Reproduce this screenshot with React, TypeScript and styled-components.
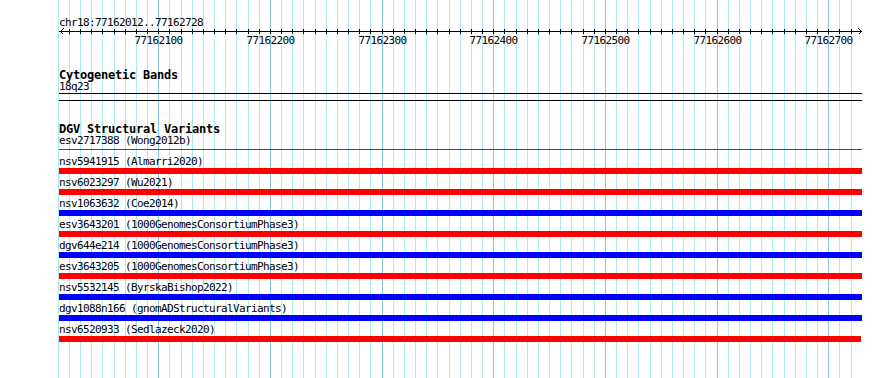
import React from 'react'
import styled, { createGlobalStyle, css } from 'styled-components'

// view: chr18:77162012..77162728, one grid line every 10 bp
const GRID_X0 = 57.8
const GRID_STEP = 11.167
const GRID_COUNT = 72
const TRACK_LEFT = 59
const gx = (k: number) => Math.round(GRID_X0 + k * GRID_STEP)
const isMajor = (k: number) => k % 10 === 9

const GlobalStyle = createGlobalStyle`
  html, body {
    margin: 0;
    padding: 0;
    background: #fff;
  }
  body {
    font-family: "DejaVu Sans Mono", "Liberation Mono", monospace;
    color: #000;
  }
`

const Panel = styled.div`
  position: relative;
  width: 890px;
  height: 378px;
  overflow: hidden;
  background: #fff;
`

const GridLayer = styled.svg`
  position: absolute;
  left: 0;
  top: 0;
  shape-rendering: crispEdges;
`

const Tracks = styled.div`
  position: relative;
  display: flex;
  flex-direction: column;
  width: 803px;
  margin-left: ${TRACK_LEFT}px;
  padding-top: 17px;
`

// regular 6px-wide label text, baseline 9px below the top of its box
const Label = styled.div<{ $h?: number }>`
  height: ${(p) => p.$h ?? 12}px;
  line-height: 11px;
  font-size: 11px;
  letter-spacing: -0.62px;
  white-space: nowrap;
`

// bold 7px-wide track title, baseline 10px below the top of its box
const TrackTitle = styled.div<{ $mt: number }>`
  margin-top: ${(p) => p.$mt}px;
  height: 12px;
  line-height: 12px;
  font-size: 12px;
  font-weight: bold;
  letter-spacing: -0.22px;
  white-space: nowrap;
`

const RulerSvg = styled.svg`
  display: block;
  overflow: visible;
  shape-rendering: crispEdges;
`

const Band = styled.div`
  box-sizing: border-box;
  height: 8px;
  border-top: 1px solid #000;
  border-bottom: 1px solid #000;
`

const Feature = styled.div<{ $color: string; $width: number; $thin?: boolean }>`
  width: ${(p) => p.$width}px;
  background: ${(p) => p.$color};
  ${(p) =>
    p.$thin
      ? css`
          height: 1px;
          margin: 2px 0 6px;
        `
      : css`
          height: 6px;
          margin-bottom: 3px;
        `}
`

const RED = '#ff0000'
const BLUE = '#0000ff'

const variants = [
  { name: 'esv2717388 (Wong2012b)', color: RED, thin: true, width: 803 },
  { name: 'nsv5941915 (Almarri2020)', color: RED, width: 803 },
  { name: 'nsv6023297 (Wu2021)', color: RED, width: 803 },
  { name: 'nsv1063632 (Coe2014)', color: BLUE, width: 803 },
  { name: 'esv3643201 (1000GenomesConsortiumPhase3)', color: RED, width: 803 },
  { name: 'dgv644e214 (1000GenomesConsortiumPhase3)', color: BLUE, width: 803 },
  { name: 'esv3643205 (1000GenomesConsortiumPhase3)', color: RED, width: 803 },
  { name: 'nsv5532145 (ByrskaBishop2022)', color: BLUE, width: 803 },
  { name: 'dgv1088n166 (gnomADStructuralVariants)', color: BLUE, width: 803 },
  { name: 'nsv6520933 (Sedlazeck2020)', color: RED, width: 802 },
]

const ks = Array.from({ length: GRID_COUNT }, (_, k) => k)

const Grid = () => (
  <GridLayer width={890} height={378}>
    {ks.map((k) => (
      <line
        key={k}
        x1={gx(k) + 0.5}
        x2={gx(k) + 0.5}
        y1={0}
        y2={378}
        stroke={isMajor(k) ? '#87c8e8' : '#aeeaee'}
        strokeWidth={1}
      />
    ))}
  </GridLayer>
)

const Ruler = () => (
  <RulerSvg width={805} height={22}>
    <line x1={0} x2={803} y1={4.5} y2={4.5} stroke="#000" />
    <polyline points="4.5,1.5 1.5,4.5 4.5,7.5" fill="none" stroke="#000" />
    <polyline points="799.5,1.5 802.5,4.5 799.5,7.5" fill="none" stroke="#000" />
    {ks.slice(1).map((k) => (
      <line key={k} x1={gx(k) - TRACK_LEFT + 0.5} x2={gx(k) - TRACK_LEFT + 0.5} y1={2} y2={7} stroke="#000" />
    ))}
    {ks.filter(isMajor).map((k) => (
      <text
        key={k}
        x={gx(k) - TRACK_LEFT - 23.5}
        y={17}
        fontSize={11}
        letterSpacing={-0.62}
        fontFamily='"DejaVu Sans Mono", "Liberation Mono", monospace'
        fill="#000"
      >
        {77162000 + ((k + 1) / 10) * 100}
      </text>
    ))}
  </RulerSvg>
)

export default function App() {
  return (
    <Panel>
      <GlobalStyle />
      <Grid />
      <Tracks>
        <Label $h={10}>chr18:77162012..77162728</Label>
        <Ruler />

        <TrackTitle $mt={20}>Cytogenetic Bands</TrackTitle>
        <Label $h={12}>18q23</Label>
        <Band />

        <TrackTitle $mt={22}>DGV Structural Variants</TrackTitle>
        {variants.map((v) => (
          <React.Fragment key={v.name}>
            <Label>{v.name}</Label>
            <Feature $color={v.color} $width={v.width} $thin={v.thin} />
          </React.Fragment>
        ))}
      </Tracks>
    </Panel>
  )
}
